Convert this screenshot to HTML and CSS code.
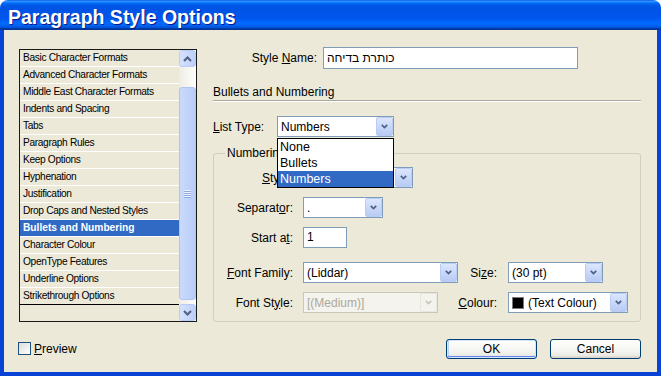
FILE: index.html
```html
<!DOCTYPE html>
<html lang="en">
<head>
<meta charset="utf-8">
<title>Paragraph Style Options</title>
<link rel="stylesheet" href="styles.css">
</head>
<body>
<div class="window">
  <div class="titlebar"><span class="title">Paragraph Style Options</span></div>
  <div class="client">
    <div class="main">
      <div class="catlist">
        <ul class="rows">
          <li>Basic Character Formats</li>
          <li>Advanced Character Formats</li>
          <li>Middle East Character Formats</li>
          <li>Indents and Spacing</li>
          <li>Tabs</li>
          <li>Paragraph Rules</li>
          <li>Keep Options</li>
          <li>Hyphenation</li>
          <li>Justification</li>
          <li>Drop Caps and Nested Styles</li>
          <li class="sel">Bullets and Numbering</li>
          <li>Character Colour</li>
          <li>OpenType Features</li>
          <li>Underline Options</li>
          <li class="last">Strikethrough Options</li>
        </ul>
        <div class="vscroll">
          <div class="sbtn"><svg width="9" height="6" viewBox="0 0 9 6"><polyline points="1,5 4.5,1.5 8,5" fill="none" stroke="#4D6185" stroke-width="2"/></svg></div>
          <div class="track">
            <div class="thumb"><span class="grip"></span><span class="grip"></span><span class="grip"></span><span class="grip"></span></div>
          </div>
          <div class="sbtn"><svg width="9" height="6" viewBox="0 0 9 6"><polyline points="1,1 4.5,4.5 8,1" fill="none" stroke="#4D6185" stroke-width="2"/></svg></div>
        </div>
      </div>

      <div class="panel">
        <div class="nrow">
          <span class="nlbl">Style <u>N</u>ame:</span>
          <div class="textbox namebox">כותרת בדיחה</div>
        </div>
        <div class="section">Bullets and Numbering</div>
        <div class="lrow">
          <span class="llbl"><u>L</u>ist Type:</span>
          <div class="combo w117"><span class="val">Numbers</span><span class="arrow"><svg width="7" height="5" viewBox="0 0 7 5"><polyline points="0.8,0.8 3.5,3.5 6.2,0.8" fill="none" stroke="#4D6185" stroke-width="1.7"/></svg></span></div>
        </div>

        <fieldset class="group">
          <legend><span class="cut-legend">Numbering Style</span></legend>
          <div class="grow">
            <span class="glbl"><span class="cut-style"><u>S</u>tyle:</span></span>
            <div class="combo w110"><span class="val"></span><span class="arrow"><svg width="7" height="5" viewBox="0 0 7 5"><polyline points="0.8,0.8 3.5,3.5 6.2,0.8" fill="none" stroke="#4D6185" stroke-width="1.7"/></svg></span></div>
          </div>
          <div class="grow">
            <span class="glbl">Separat<u>o</u>r:</span>
            <div class="combo w80"><span class="val">.</span><span class="arrow"><svg width="7" height="5" viewBox="0 0 7 5"><polyline points="0.8,0.8 3.5,3.5 6.2,0.8" fill="none" stroke="#4D6185" stroke-width="1.7"/></svg></span></div>
          </div>
          <div class="grow">
            <span class="glbl">Start a<u>t</u>:</span>
            <div class="textbox w44">1</div>
          </div>
          <div class="grow wide">
            <span class="glbl"><u>F</u>ont Family:</span>
            <div class="combo w155"><span class="val">(Liddar)</span><span class="arrow"><svg width="7" height="5" viewBox="0 0 7 5"><polyline points="0.8,0.8 3.5,3.5 6.2,0.8" fill="none" stroke="#4D6185" stroke-width="1.7"/></svg></span></div>
            <span class="slbl s39">Si<u>z</u>e:</span>
            <div class="combo w95"><span class="val">(30 pt)</span><span class="arrow"><svg width="7" height="5" viewBox="0 0 7 5"><polyline points="0.8,0.8 3.5,3.5 6.2,0.8" fill="none" stroke="#4D6185" stroke-width="1.7"/></svg></span></div>
          </div>
          <div class="grow">
            <span class="glbl">Font St<u>y</u>le:</span>
            <div class="combo w135 disabled"><span class="val">[(Medium)]</span><span class="arrow"><svg width="7" height="5" viewBox="0 0 7 5"><polyline points="0.8,0.8 3.5,3.5 6.2,0.8" fill="none" stroke="#C9C7BA" stroke-width="1.7"/></svg></span></div>
            <span class="slbl s59"><u>C</u>olour:</span>
            <div class="combo w120"><span class="swatch"></span><span class="val">(Text Colour)</span><span class="arrow"><svg width="7" height="5" viewBox="0 0 7 5"><polyline points="0.8,0.8 3.5,3.5 6.2,0.8" fill="none" stroke="#4D6185" stroke-width="1.7"/></svg></span></div>
          </div>
        </fieldset>

        <ul class="popup">
          <li>None</li>
          <li>Bullets</li>
          <li class="sel">Numbers</li>
        </ul>
      </div>
    </div>

    <div class="footer">
      <span class="checkbox"></span>
      <span class="cblabel"><u>P</u>review</span>
      <span class="spacer"></span>
      <button class="btn default">OK</button>
      <button class="btn">Cancel</button>
    </div>
  </div>
</div>
</body>
</html>
```

FILE: styles.css
```css
html, body {
  margin: 0;
  padding: 0;
  background: #ffffff;
}

body {
  font-family: "Liberation Sans", Arial, sans-serif;
  font-size: 12px;
  color: #000;
}

u {
  text-decoration: underline;
  text-underline-offset: 1px;
}

.window {
  width: 661px;
  height: 376px;
  display: flex;
  flex-direction: column;
  border-radius: 8px 8px 0 0;
  overflow: hidden;
}

.titlebar {
  height: 30px;
  flex: none;
  background: linear-gradient(to bottom, #0058EE 0%, #3593FF 4%, #288EFF 6%, #127DFF 8%, #036FFC 10%, #0262EE 14%, #0057E5 20%, #0054E3 24%, #0055EB 56%, #005BF5 66%, #026AFE 76%, #0062EF 86%, #0052D6 92%, #0040AB 94%, #003092 100%);
  display: flex;
  align-items: center;
  padding-left: 8px;
  box-sizing: border-box;
}

.title {
  color: #fff;
  font-weight: bold;
  font-size: 19.5px;
  line-height: 22px;
  padding-top: 3px;
  text-shadow: 1px 1px 0 #0A1883;
}

.client {
  flex: 1;
  background: #ECE9D8;
  border: solid #0843D6;
  border-width: 0 4px 4px 4px;
  display: flex;
  flex-direction: column;
}

.main {
  display: flex;
  padding: 0 16px 0 15px;
}

/* category list */
.catlist {
  margin-top: 19px;
  width: 178px;
  height: 273px;
  box-sizing: border-box;
  border: 1px solid #1A1A1A;
  display: flex;
  flex: none;
}

.rows {
  list-style: none;
  margin: 0;
  padding: 0;
  flex: 1;
  align-self: flex-start;
}

.rows li {
  height: 16px;
  line-height: 16px;
  border-bottom: 1px solid #ffffff;
  padding-left: 3px;
  font-size: 10.2px;
  letter-spacing: -0.35px;
  white-space: nowrap;
}

.rows li.last {
  border-bottom-color: #000;
}

.rows li.sel {
  background: #316AC5;
  color: #fff;
  font-weight: bold;
  letter-spacing: 0;
}

.vscroll {
  width: 17px;
  display: flex;
  flex-direction: column;
  background: linear-gradient(to right, #EEEDE5, #FEFEFB);
}

.sbtn {
  height: 17px;
  box-sizing: border-box;
  border: 1px solid #B9CCF6;
  border-radius: 3px;
  background: linear-gradient(to right, #D6E2FD, #BCCFF7);
  display: flex;
  align-items: center;
  justify-content: center;
  flex: none;
}

.track {
  flex: 1;
  display: flex;
  flex-direction: column;
}

.thumb {
  margin-top: 20px;
  height: 213px;
  box-sizing: border-box;
  border: 1px solid #AFC4F3;
  border-radius: 3px;
  background: linear-gradient(to right, #CBDAFC, #B8CCF7);
  display: flex;
  flex-direction: column;
  align-items: center;
  justify-content: center;
  gap: 1px;
}

.grip {
  width: 7px;
  height: 1px;
  background: #EEF4FE;
  box-shadow: 0 1px 0 #8CA8E6;
}

/* right panel */
.panel {
  position: relative;
  margin-left: 16px;
  flex: 1;
  padding-top: 17px;
}

.nrow, .lrow, .grow {
  display: flex;
  align-items: center;
  height: 21px;
}

.nlbl {
  width: 104px;
  text-align: right;
  margin-right: 6px;
}

.llbl {
  width: 64px;
}

.textbox {
  height: 21px;
  box-sizing: border-box;
  border: 1px solid #7F9DB9;
  background: #fff;
  padding-left: 3px;
  line-height: 19px;
  white-space: nowrap;
}

.namebox {
  width: 255px;
  height: 22px;
  line-height: 20px;
}

.section {
  margin-top: 17px;
  line-height: 15px;
  border-bottom: 1px solid #ACA899;
  box-shadow: 0 1px 0 #fff;
}

.lrow {
  margin-top: 15px;
}

.combo {
  height: 21px;
  box-sizing: border-box;
  border: 1px solid #7F9DB9;
  background: #fff;
  padding-left: 3px;
  display: flex;
  align-items: center;
  flex: none;
}

.combo .val {
  flex: 1;
  white-space: nowrap;
  overflow: hidden;
}

.combo .arrow {
  width: 17px;
  height: 19px;
  box-sizing: border-box;
  border: 1px solid #B9CCF6;
  border-radius: 2px;
  background: linear-gradient(to bottom, #DCE6FD, #B8CBF5);
  display: flex;
  align-items: center;
  justify-content: center;
  flex: none;
}

.combo.disabled {
  border-color: #C9C7BA;
  background: #F4F3EE;
  color: #ACA899;
}

.combo.disabled .arrow {
  border-color: #E8E6DD;
  background: #F4F3EE;
}

.swatch {
  width: 10px;
  height: 10px;
  background: #000;
  border: 1px solid #7A7A7A;
  margin-right: 4px;
  flex: none;
}

.w117 { width: 117px; }
.w110 { width: 110px; }
.w80 { width: 80px; }
.w44 { width: 44px; }
.w155 { width: 155px; }
.w95 { width: 95px; }
.w135 { width: 135px; }
.w120 { width: 120px; }

.group {
  margin: 9px 0 0 0;
  padding: 7px 0 8px 0;
  border: 1px solid #D0D0BF;
  border-radius: 3px;
  min-width: 0;
}

.group legend {
  margin-left: 11px;
  padding: 0 2px;
  line-height: 14px;
}

/* parts of these labels are hidden behind the open list */
.cut-legend {
  display: inline-block;
  width: 50px;
  overflow: hidden;
  white-space: nowrap;
  vertical-align: top;
}

.cut-style {
  display: inline-block;
  width: 15px;
  margin-right: 16px;
  overflow: hidden;
  white-space: nowrap;
  text-align: left;
  vertical-align: top;
}

.grow + .grow {
  margin-top: 9px;
}

.grow.wide {
  margin-top: 14px;
}

.glbl {
  width: 79px;
  text-align: right;
  margin-right: 10px;
  white-space: nowrap;
}

.slbl {
  text-align: right;
  margin-right: 11px;
  white-space: nowrap;
}

.s39 { width: 39px; }
.s59 { width: 59px; }

.popup {
  position: absolute;
  left: 64px;
  top: 108px;
  width: 117px;
  box-sizing: border-box;
  margin: 0;
  padding: 0;
  list-style: none;
  border: 1px solid #000;
  background: #fff;
}

.popup li {
  height: 16px;
  line-height: 16px;
  padding-left: 2px;
  font-size: 12.5px;
}

.popup li.sel {
  background: #316AC5;
  color: #fff;
}

/* footer */
.footer {
  display: flex;
  align-items: center;
  padding: 16px 16px 0 14px;
}

.checkbox {
  width: 13px;
  height: 13px;
  box-sizing: border-box;
  border: 1px solid #1C5180;
  background: linear-gradient(135deg, #DCDCD7, #FFFFFF);
}

.cblabel {
  margin-left: 3px;
}

.spacer {
  flex: 1;
}

.btn {
  width: 91px;
  height: 20px;
  margin-top: 1px;
  box-sizing: border-box;
  border: 1px solid #003C74;
  border-radius: 3px;
  background: linear-gradient(to bottom, #FFFFFF 0%, #F4F4F0 60%, #ECEBE6 85%, #D6D0C5 100%);
  font-family: "Liberation Sans", Arial, sans-serif;
  font-size: 12px;
  color: #000;
  padding: 0;
}

.btn.default {
  box-shadow: inset 0 0 0 1px #CEE7FF, inset 0 -1px 0 1px #6982EE, inset 1px 0 0 1px #BCD4F6;
}

.btn + .btn {
  margin-left: 13px;
}
```
